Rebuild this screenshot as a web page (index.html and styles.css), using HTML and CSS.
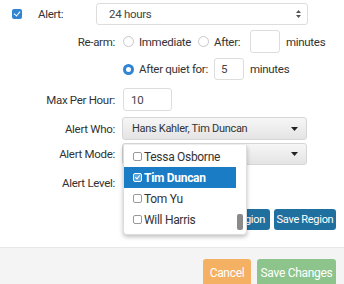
FILE: index.html
```html
<!DOCTYPE html>
<html>

<head>
    <meta charset="UTF-8">
    <title>Alert Settings</title>
    <link rel="stylesheet" href="styles.css">
</head>

<body>
    <div class="panel">
        <div class="row alert-row">
            <span class="check on"></span>
            <span class="alert-label">Alert:</span>
            <div class="select plain wide">
                <span>24 hours</span>
                <svg class="updown" width="5" height="8" viewBox="0 0 5 8"><path d="M2.5 0 L5 3 L0 3 Z M2.5 8 L5 5 L0 5 Z" fill="#555"/></svg>
            </div>
        </div>

        <div class="row rearm-row">
            <span class="label">Re-arm:</span>
            <span class="radio"></span><span class="opt opt-immediate">Immediate</span>
            <span class="radio"></span><span class="opt opt-after">After:</span>
            <span class="box mins"></span><span class="unit">minutes</span>
        </div>

        <div class="row quiet-row">
            <span class="label"></span>
            <span class="radio on"></span><span class="opt opt-quiet">After quiet for:</span>
            <span class="box mins">5</span><span class="unit">minutes</span>
        </div>

        <div class="row max-row">
            <span class="label">Max Per Hour:</span>
            <span class="box per-hour">10</span>
        </div>

        <div class="row who-row">
            <span class="label">Alert Who:</span>
            <div class="select chosen">
                <span>Hans Kahler, Tim Duncan</span>
                <svg class="caret" width="7" height="4" viewBox="0 0 7 4"><path d="M0 0 L7 0 L3.5 4 Z" fill="#222"/></svg>
            </div>
        </div>

        <div class="row mode-row">
            <span class="label">Alert Mode:</span>
            <div class="select chosen">
                <span></span>
                <svg class="caret" width="7" height="4" viewBox="0 0 7 4"><path d="M0 0 L7 0 L3.5 4 Z" fill="#222"/></svg>
            </div>
        </div>

        <div class="row level-row">
            <span class="label">Alert Level:</span>
        </div>

        <div class="region-buttons">
            <button class="btn blue delete">Delete Region</button>
            <button class="btn blue">Save Region</button>
        </div>

        <!-- open list of the Alert Who select -->
        <div class="dropdown">
            <div class="item"><span class="mini-check"></span>Tessa Osborne</div>
            <div class="item active"><span class="mini-check on"></span>Tim Duncan</div>
            <div class="item"><span class="mini-check"></span>Tom Yu</div>
            <div class="item"><span class="mini-check"></span>Will Harris</div>
            <span class="thumb"></span>
        </div>
    </div>

    <div class="footer">
        <button class="btn orange">Cancel</button>
        <button class="btn green">Save Changes</button>
    </div>
</body>

</html>
```

FILE: styles.css
```css
body {
    margin: 0;
    width: 344px;
    height: 284px;
    background: #fff;
    font-family: Roboto, "Liberation Sans", sans-serif;
    font-size: 11.5px;
    letter-spacing: -0.3px;
    color: #333;
    overflow: hidden;
}

.panel {
    position: relative;
    height: 244px;
    border-bottom: 1px solid #e8e8e8;
}

.row {
    display: flex;
    align-items: center;
    height: 23px;
}

.label {
    width: 115px;
    text-align: right;
    flex-shrink: 0;
}

/* alert row */
.alert-row {
    margin-top: 3px;
    height: 22px;
}

.check {
    width: 10px;
    height: 10px;
    margin-left: 12px;
    border-radius: 2px;
    background: #2f84d3;
    position: relative;
}

.check.on::after {
    content: "";
    position: absolute;
    left: 3px;
    top: 1px;
    width: 3px;
    height: 5px;
    border: solid #fff;
    border-width: 0 1.5px 1.5px 0;
    transform: rotate(40deg);
}

.alert-label {
    margin-left: 16px;
    width: 58px;
}

.select {
    display: flex;
    align-items: center;
    justify-content: space-between;
    box-sizing: border-box;
    border: 1px solid #ddd;
    border-radius: 3px;
    height: 100%;
    color: #444;
}

.select.plain {
    width: 212px;
    padding: 0 6px 0 12px;
}

.select.chosen {
    width: 185px;
    margin-left: 7px;
    padding: 0 8px 0 9px;
    font-size: 11px;
    color: #333;
    background: linear-gradient(#f6f6f6, #e4e4e4);
    border-color: #d6d6d6;
}

/* radio rows */
.rearm-row {
    margin-top: 5px;
}

.quiet-row {
    margin-top: 5px;
    height: 22px;
}

.radio {
    box-sizing: border-box;
    width: 11px;
    height: 11px;
    border: 1px solid #c8c8c8;
    border-radius: 50%;
    margin-left: 8px;
    margin-right: 5px;
    flex-shrink: 0;
}

.radio.on {
    border: 3px solid #2f84d3;
    background: #fff;
}

.opt {
    white-space: nowrap;
}

.opt-immediate {
    width: 51px;
}

.opt-after {
    width: 36px;
}

.opt-quiet {
    width: 75px;
}

.box {
    box-sizing: border-box;
    height: 100%;
    border: 1px solid #ddd;
    border-radius: 3px;
    padding-left: 6px;
    display: flex;
    align-items: center;
    color: #444;
    flex-shrink: 0;
}

.mins {
    width: 30px;
}

.unit {
    margin-left: 6px;
}

.max-row {
    margin-top: 8px;
}

.per-hour {
    width: 49px;
    margin-left: 8px;
    padding-left: 7px;
}

.who-row {
    margin-top: 6px;
}

.mode-row {
    margin-top: 3px;
    height: 22px;
}

.level-row {
    margin-top: 7px;
    height: 22px;
}

/* buttons */
.btn {
    font-family: inherit;
    letter-spacing: -0.3px;
    border: none;
    border-radius: 3px;
    color: #fff;
    font-size: 11px;
    padding: 0;
}

.region-buttons {
    display: flex;
    justify-content: flex-end;
    gap: 4px;
    margin-top: 15px;
    padding-right: 8px;
}

.region-buttons .btn {
    height: 21px;
    width: 62px;
}

.btn.delete {
    width: 70px;
    text-align: right;
    padding-right: 5px;
}

.btn.blue {
    background: #20709f;
}

.footer {
    background: #f4f4f4;
    height: 39px;
    display: flex;
    justify-content: flex-end;
    align-items: flex-start;
    gap: 6px;
    padding-right: 8px;
    box-sizing: border-box;
    padding-top: 11px;
}

.footer .btn {
    height: 27px;
    font-size: 12px;
}

.btn.orange {
    width: 48px;
    background: #f5b163;
}

.btn.green {
    width: 79px;
    background: #8cc48c;
}

/* open dropdown list */
.dropdown {
    position: absolute;
    left: 123px;
    top: 142px;
    width: 124px;
    height: 90px;
    background: #fff;
    border: 1px solid #ddd;
    border-top: none;
    border-radius: 0 0 4px 4px;
    box-shadow: 0 2px 4px rgba(0, 0, 0, 0.25);
    box-sizing: border-box;
    padding-top: 1px;
}

.item {
    display: flex;
    align-items: center;
    height: 21px;
    padding-left: 9px;
    font-size: 12px;
    color: #333;
    margin-right: 12px;
}

.item.active {
    background: #1a7cc4;
    color: #fff;
    font-weight: bold;
    margin-right: 10px;
}

.mini-check {
    box-sizing: border-box;
    width: 9px;
    height: 9px;
    border: 1px solid #999;
    border-radius: 2px;
    background: #fff;
    margin-right: 2px;
    position: relative;
}

.mini-check.on {
    border-color: #fff;
    background: #5aa3dc;
}

.mini-check.on::after {
    content: "";
    position: absolute;
    left: 2px;
    top: 0;
    width: 2px;
    height: 4px;
    border: solid #fff;
    border-width: 0 1px 1px 0;
    transform: rotate(40deg);
}

.thumb {
    position: absolute;
    right: 3px;
    bottom: 4px;
    width: 6px;
    height: 16px;
    border-radius: 2px;
    background: #8a8a8a;
}
```
